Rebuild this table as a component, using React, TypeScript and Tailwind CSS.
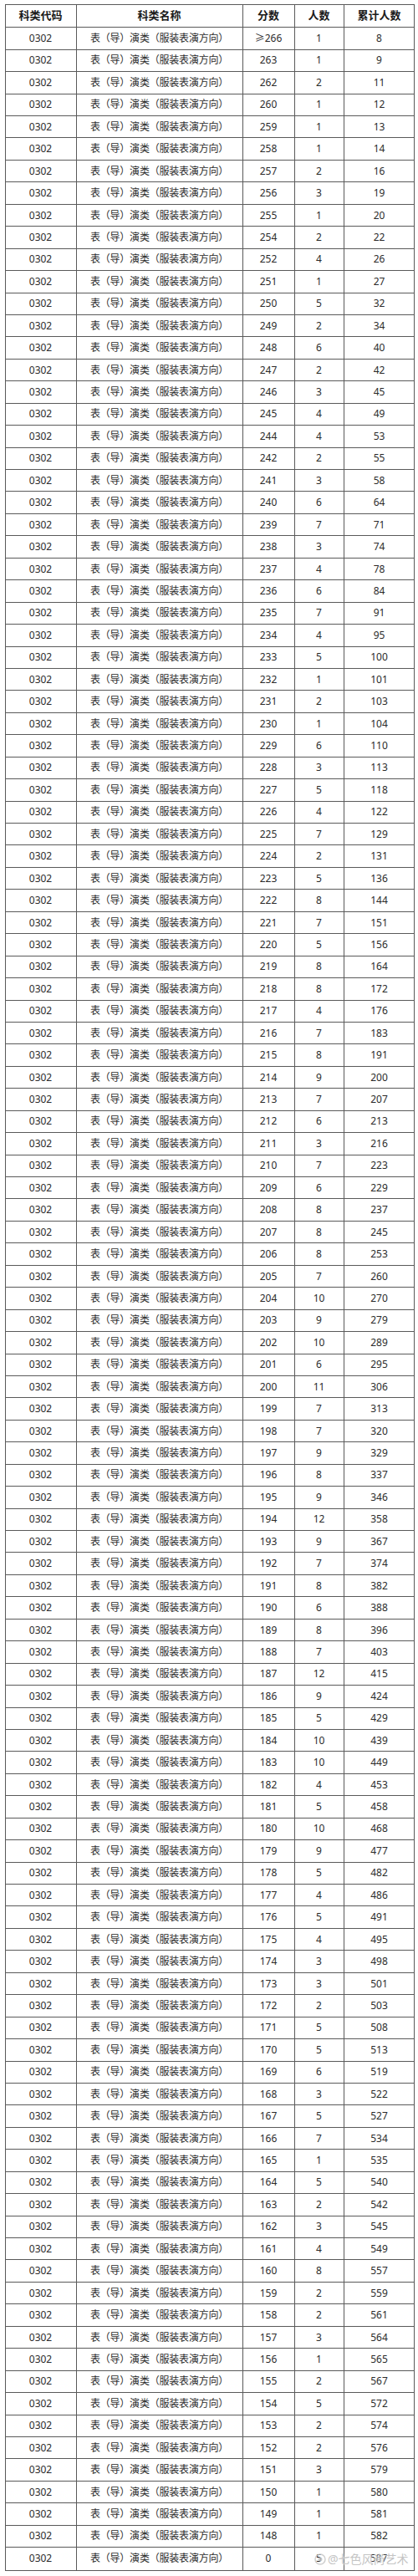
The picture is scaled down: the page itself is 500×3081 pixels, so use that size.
import React from "react";

const raw = `≥266,1,8
263,1,9
262,2,11
260,1,12
259,1,13
258,1,14
257,2,16
256,3,19
255,1,20
254,2,22
252,4,26
251,1,27
250,5,32
249,2,34
248,6,40
247,2,42
246,3,45
245,4,49
244,4,53
242,2,55
241,3,58
240,6,64
239,7,71
238,3,74
237,4,78
236,6,84
235,7,91
234,4,95
233,5,100
232,1,101
231,2,103
230,1,104
229,6,110
228,3,113
227,5,118
226,4,122
225,7,129
224,2,131
223,5,136
222,8,144
221,7,151
220,5,156
219,8,164
218,8,172
217,4,176
216,7,183
215,8,191
214,9,200
213,7,207
212,6,213
211,3,216
210,7,223
209,6,229
208,8,237
207,8,245
206,8,253
205,7,260
204,10,270
203,9,279
202,10,289
201,6,295
200,11,306
199,7,313
198,7,320
197,9,329
196,8,337
195,9,346
194,12,358
193,9,367
192,7,374
191,8,382
190,6,388
189,8,396
188,7,403
187,12,415
186,9,424
185,5,429
184,10,439
183,10,449
182,4,453
181,5,458
180,10,468
179,9,477
178,5,482
177,4,486
176,5,491
175,4,495
174,3,498
173,3,501
172,2,503
171,5,508
170,5,513
169,6,519
168,3,522
167,5,527
166,7,534
165,1,535
164,5,540
163,2,542
162,3,545
161,4,549
160,8,557
159,2,559
158,2,561
157,3,564
156,1,565
155,2,567
154,5,572
153,2,574
152,2,576
151,3,579
150,1,580
149,1,581
148,1,582
0,5,587`;

const rows = raw.split("\n").map((l) => l.split(","));

const gridCols = "grid grid-cols-[85px_199px_62px_59px_84px]";
const cell = "flex items-center justify-center border-r border-[#5a5a5a] last:border-r-0";

export default function App() {
  return (
    <div
      className="w-[500px] bg-white pt-[5px] pb-[6px] pl-[5.5px] text-[#2b2b2b]"
      style={{ fontFamily: '"Noto Sans", "Noto Sans CJK SC", sans-serif' }}
    >
      <div className="w-[490px] border border-[#5a5a5a]">
        <div className={`${gridCols} h-[27.3px] border-b border-[#5a5a5a] text-[13px] font-bold text-[#1a1a1a]`}>
          <div className={cell}>科类代码</div>
          <div className={cell}>科类名称</div>
          <div className={cell}>分数</div>
          <div className={cell}>人数</div>
          <div className={cell}>累计人数</div>
        </div>
        {rows.map((r, i) => (
          <div
            key={i}
            className={`${gridCols} relative h-[26.45px] border-b border-[#5a5a5a] last:border-b-0 text-[12px]`}
          >
            <div className={cell}>0302</div>
            <div className={`${cell} tracking-[-0.2px]`}>表（导）演类（服装表演方向）</div>
            <div className={cell}>{r[0]}</div>
            <div className={cell}>{r[1]}</div>
            <div className={cell}>{r[2]}</div>
            {i === rows.length - 1 && (
              <div className="absolute right-[6px] top-[3px] flex items-center gap-[2px] text-[14px] text-[#c4c4c4] [text-shadow:0_0_2px_#ffffff]">
                <svg width="14" height="14" viewBox="0 0 14 14" className="opacity-80">
                  <circle cx="7" cy="7" r="6" fill="none" stroke="#c4c4c4" strokeWidth="1.5" />
                  <circle cx="7" cy="7" r="2.5" fill="#c4c4c4" />
                </svg>
                <span>@七色风尚艺术</span>
              </div>
            )}
          </div>
        ))}
      </div>
    </div>
  );
}
